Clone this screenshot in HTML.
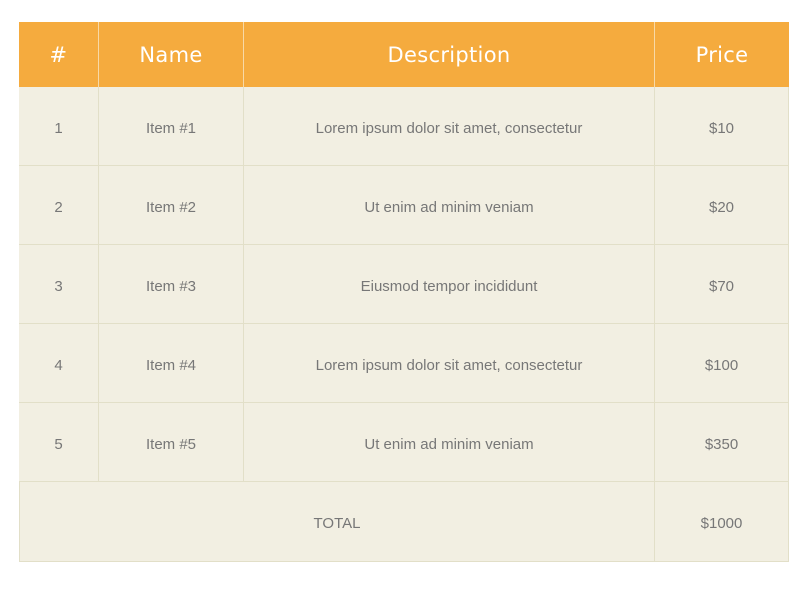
<!DOCTYPE html>
<html><head><style>
body{margin:0;background:#fff;width:806px;height:594px;position:relative;font-family:"Liberation Sans",sans-serif;}
.c{position:absolute;box-sizing:border-box;display:flex;align-items:center;justify-content:center;}
.h{background:#f5ab3e;color:#fff;font-size:21px;border-right:1px solid #f8d9a6;font-family:"DejaVu Sans","Liberation Sans",sans-serif;font-weight:normal;letter-spacing:0.3px}
.b{background:#f2efe2;color:#777;font-size:15px;font-family:"Liberation Sans",Arial,sans-serif;border-right:1px solid #e2dfc8;border-bottom:1px solid #e2dfc8;padding-top:4px}
</style></head><body>
<div style="position:absolute;left:19px;top:22px;width:770px;height:540px;border:1px solid #e2dfc8;box-sizing:border-box;background:#f2efe2"></div>
<div class="c h" style="left:19px;top:22px;width:80px;height:65px">#</div>
<div class="c h" style="left:99px;top:22px;width:145px;height:65px">Name</div>
<div class="c h" style="left:244px;top:22px;width:411px;height:65px">Description</div>
<div class="c h" style="left:655px;top:22px;width:134px;height:65px;border-right:none">Price</div>

<div class="c b" style="left:19px;top:87px;width:80px;height:79px">1</div>
<div class="c b" style="left:99px;top:87px;width:145px;height:79px">Item #1</div>
<div class="c b" style="left:244px;top:87px;width:411px;height:79px">Lorem ipsum dolor sit amet, consectetur</div>
<div class="c b" style="left:655px;top:87px;width:134px;height:79px">$10</div>

<div class="c b" style="left:19px;top:166px;width:80px;height:79px">2</div>
<div class="c b" style="left:99px;top:166px;width:145px;height:79px">Item #2</div>
<div class="c b" style="left:244px;top:166px;width:411px;height:79px">Ut enim ad minim veniam</div>
<div class="c b" style="left:655px;top:166px;width:134px;height:79px">$20</div>

<div class="c b" style="left:19px;top:245px;width:80px;height:79px">3</div>
<div class="c b" style="left:99px;top:245px;width:145px;height:79px">Item #3</div>
<div class="c b" style="left:244px;top:245px;width:411px;height:79px">Eiusmod tempor incididunt</div>
<div class="c b" style="left:655px;top:245px;width:134px;height:79px">$70</div>

<div class="c b" style="left:19px;top:324px;width:80px;height:79px">4</div>
<div class="c b" style="left:99px;top:324px;width:145px;height:79px">Item #4</div>
<div class="c b" style="left:244px;top:324px;width:411px;height:79px">Lorem ipsum dolor sit amet, consectetur</div>
<div class="c b" style="left:655px;top:324px;width:134px;height:79px">$100</div>

<div class="c b" style="left:19px;top:403px;width:80px;height:79px">5</div>
<div class="c b" style="left:99px;top:403px;width:145px;height:79px">Item #5</div>
<div class="c b" style="left:244px;top:403px;width:411px;height:79px">Ut enim ad minim veniam</div>
<div class="c b" style="left:655px;top:403px;width:134px;height:79px">$350</div>

<div class="c b" style="left:19px;top:482px;width:636px;height:80px;border-left:1px solid #e2dfc8">TOTAL</div>
<div class="c b" style="left:655px;top:482px;width:134px;height:80px">$1000</div>
</body></html>
